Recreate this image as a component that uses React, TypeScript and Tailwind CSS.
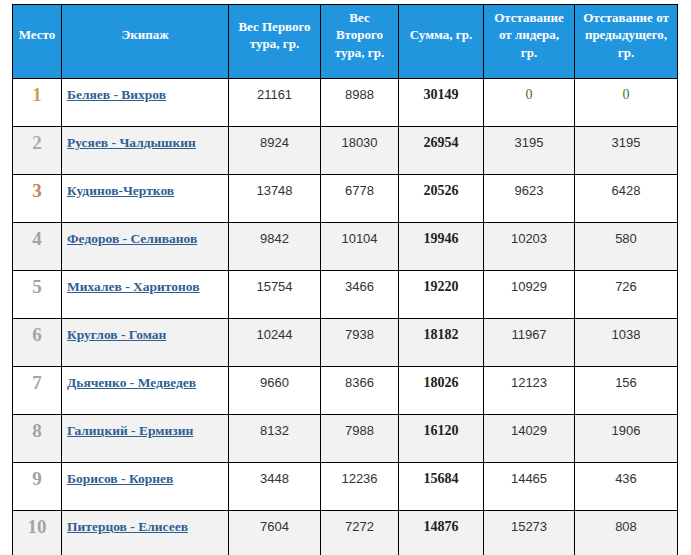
import React from "react";

type Row = {
  place: number;
  crew: string;
  w1: number;
  w2: number;
  sum: number;
  lead: number;
  prev: number;
};

const rows: Row[] = [
  { place: 1, crew: "Беляев - Вихров", w1: 21161, w2: 8988, sum: 30149, lead: 0, prev: 0 },
  { place: 2, crew: "Русяев - Чалдышкин", w1: 8924, w2: 18030, sum: 26954, lead: 3195, prev: 3195 },
  { place: 3, crew: "Кудинов-Чертков", w1: 13748, w2: 6778, sum: 20526, lead: 9623, prev: 6428 },
  { place: 4, crew: "Федоров - Селиванов", w1: 9842, w2: 10104, sum: 19946, lead: 10203, prev: 580 },
  { place: 5, crew: "Михалев - Харитонов", w1: 15754, w2: 3466, sum: 19220, lead: 10929, prev: 726 },
  { place: 6, crew: "Круглов - Гоман", w1: 10244, w2: 7938, sum: 18182, lead: 11967, prev: 1038 },
  { place: 7, crew: "Дьяченко - Медведев", w1: 9660, w2: 8366, sum: 18026, lead: 12123, prev: 156 },
  { place: 8, crew: "Галицкий - Ермизин", w1: 8132, w2: 7988, sum: 16120, lead: 14029, prev: 1906 },
  { place: 9, crew: "Борисов - Корнев", w1: 3448, w2: 12236, sum: 15684, lead: 14465, prev: 436 },
  { place: 10, crew: "Питерцов - Елисеев", w1: 7604, w2: 7272, sum: 14876, lead: 15273, prev: 808 },
];

const headers: string[][] = [
  ["Место"],
  ["Экипаж"],
  ["Вес Первого", "тура, гр."],
  ["Вес", "Второго", "тура, гр."],
  ["Сумма, гр."],
  ["Отставание", "от лидера,", "гр."],
  ["Отставание от", "предыдущего,", "гр."],
];

const serif = "font-['Liberation_Serif','Times_New_Roman',serif]";
const sans = "font-['Liberation_Sans',Arial,sans-serif]";

function placeColor(p: number) {
  if (p === 1) return "text-[#c9a24a]";
  if (p === 2) return "text-[#a8abb0]";
  if (p === 3) return "text-[#c4845a]";
  return "text-[#a3a3a3]";
}

export default function App() {
  return (
    <div className="w-[691px] h-[555px] overflow-hidden bg-white pt-[4px] pl-[12px]">
      <div className="grid grid-cols-[49px_167px_92px_78px_85px_91px_103px] w-[666px] border-l border-t border-black">
        {headers.map((h, i) => (
          <div
            key={i}
            className={`h-[74px] bg-[#2196df] border-r border-b border-black flex flex-col items-center justify-center text-center pb-[13px] ${serif} text-white font-bold text-[13px] leading-[17.5px]`}
          >
            {h.map((line, j) => (
              <span key={j} className="whitespace-nowrap">
                {line}
              </span>
            ))}
          </div>
        ))}
        {rows.map((r, idx) => {
          const bg = idx % 2 === 1 ? "bg-[#f2f2f2]" : "bg-white";
          const cell = `h-[48px] border-r border-b border-black ${bg}`;
          const zero = "text-[#3f7d20]";
          return (
            <React.Fragment key={r.place}>
              <div className={`${cell} pt-[4px] text-center ${serif} font-bold text-[19px] leading-[24px] ${placeColor(r.place)}`}>
                {r.place}
              </div>
              <div className={`${cell} pt-[7px] pl-[5px] ${serif} font-bold text-[13.5px] leading-[18px]`}>
                <a href="#" className="text-[#2e5f92] underline">
                  {r.crew}
                </a>
              </div>
              <div className={`${cell} pt-[7px] text-center ${sans} text-[13px] leading-[18px] text-[#333]`}>{r.w1}</div>
              <div className={`${cell} pt-[7px] text-center ${sans} text-[13px] leading-[18px] text-[#333]`}>{r.w2}</div>
              <div className={`${cell} pt-[7px] text-center ${serif} font-bold text-[14px] leading-[18px] text-[#222]`}>{r.sum}</div>
              <div
                className={`${cell} pt-[7px] text-center text-[13px] leading-[18px] ${
                  r.lead === 0 ? `${serif} ${zero} text-[14px]` : `${sans} text-[#333]`
                }`}
              >
                {r.lead}
              </div>
              <div
                className={`${cell} pt-[7px] text-center text-[13px] leading-[18px] ${
                  r.prev === 0 ? `${serif} ${zero} text-[14px]` : `${sans} text-[#333]`
                }`}
              >
                {r.prev}
              </div>
            </React.Fragment>
          );
        })}
      </div>
    </div>
  );
}
